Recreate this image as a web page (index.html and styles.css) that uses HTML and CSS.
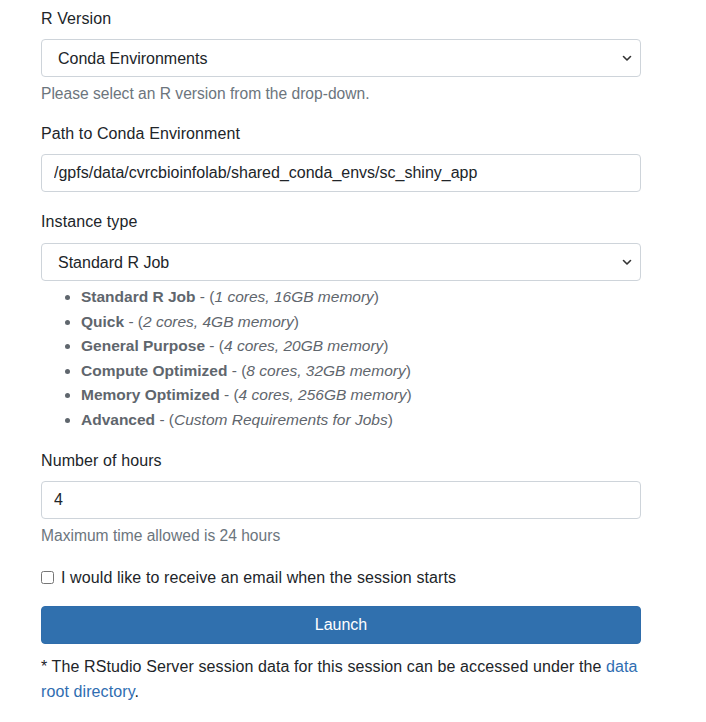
FILE: index.html
```html
<!DOCTYPE html>
<html lang="en">
<head>
<meta charset="utf-8">
<title>RStudio Server</title>
<link rel="stylesheet" href="styles.css">
</head>
<body>
<form class="form">
  <div class="group">
    <label class="label" for="rver">R Version</label>
    <div class="select-wrap">
      <select id="rver" class="control select"><option>Conda Environments</option></select>
      <svg class="chev" width="10" height="7" viewBox="0 0 10 7"><path d="M1.5 1.5 L5 5 L8.5 1.5" fill="none" stroke="#333" stroke-width="1.6" stroke-linecap="round" stroke-linejoin="round"/></svg>
    </div>
    <small class="help">Please select an R version from the drop-down.</small>
  </div>
  <div class="group group-path">
    <label class="label" for="path">Path to Conda Environment</label>
    <input id="path" class="control input" type="text" value="/gpfs/data/cvrcbioinfolab/shared_conda_envs/sc_shiny_app">
  </div>
  <div class="group group-types">
    <label class="label" for="inst">Instance type</label>
    <div class="select-wrap">
      <select id="inst" class="control select"><option>Standard R Job</option></select>
      <svg class="chev" width="10" height="7" viewBox="0 0 10 7"><path d="M1.5 1.5 L5 5 L8.5 1.5" fill="none" stroke="#333" stroke-width="1.6" stroke-linecap="round" stroke-linejoin="round"/></svg>
    </div>
    <ul class="types">
      <li><b>Standard R Job</b> - (<i>1 cores, 16GB memory</i>)</li>
      <li><b>Quick</b> - (<i>2 cores, 4GB memory</i>)</li>
      <li><b>General Purpose</b> - (<i>4 cores, 20GB memory</i>)</li>
      <li><b>Compute Optimized</b> - (<i>8 cores, 32GB memory</i>)</li>
      <li><b>Memory Optimized</b> - (<i>4 cores, 256GB memory</i>)</li>
      <li><b>Advanced</b> - (<i>Custom Requirements for Jobs</i>)</li>
    </ul>
  </div>
  <div class="group">
    <label class="label" for="hours">Number of hours</label>
    <input id="hours" class="control input" type="text" value="4">
    <small class="help">Maximum time allowed is 24 hours</small>
  </div>
  <div class="group check">
    <input id="email" type="checkbox" class="box">
    <label for="email" class="check-label">I would like to receive an email when the session starts</label>
  </div>
  <button type="button" class="btn">Launch</button>
  <p class="note">* The RStudio Server session data for this session can be accessed under the <a href="#" class="link">data root directory</a>.</p>
</form>
</body>
</html>
```

FILE: styles.css
```css
* { box-sizing: border-box; }
html, body { margin: 0; padding: 0; background: #fff; }
body {
  font-family: "Liberation Sans", Arial, sans-serif;
  font-size: 16px;
  line-height: 24px;
  color: #212529;
}
.form {
  width: 600px;
  margin-left: 41px;
  padding-top: 7px;
  display: flex;
  flex-direction: column;
}
.group {
  display: flex;
  flex-direction: column;
  margin-bottom: 17px;
}
.group-path { margin-bottom: 18px; }
.group-types { margin-bottom: 16px; }
.group-types .label { margin-bottom: 9px; }
.label {
  display: block;
  margin-bottom: 8px;
  letter-spacing: 0.1px;
}
.control {
  display: block;
  width: 100%;
  height: 38px;
  border: 1px solid #ced4da;
  border-radius: 4px;
  background: #fff;
  font-family: inherit;
  font-size: 16px;
  color: #212529;
  margin: 0;
  outline: none;
}
.input { padding: 0 12px; }
.select-wrap { position: relative; }
.select {
  appearance: none;
  -webkit-appearance: none;
  padding: 0 30px 0 16px;
}
.chev {
  position: absolute;
  right: 9px;
  top: 16px;
  pointer-events: none;
}
.help {
  display: block;
  margin-top: 6px;
  font-size: 15.6px;
  line-height: 22px;
  color: #6c757d;
}
.types {
  margin: 4px 0 0;
  padding-left: 40px;
  font-size: 15.5px;
  line-height: 24.6px;
  color: #5f666d;
}
.types b { font-weight: bold; }
.check {
  flex-direction: row;
  align-items: center;
  height: 26px;
  margin-top: 1px;
  margin-bottom: 15px;
}
.box {
  width: 13px;
  height: 13px;
  margin: 0 7px 0 0;
}
.check-label { line-height: 26px; letter-spacing: 0.1px; }
.btn {
  height: 38px;
  width: 100%;
  border: 1px solid #2f6dab;
  border-radius: 4px;
  background: #3070ae;
  color: #fff;
  font-family: inherit;
  font-size: 16px;
  padding: 0;
}
.note {
  margin: 10px 0 0;
  line-height: 25px;
  letter-spacing: 0.1px;
}
.link { color: #2f6db1; text-decoration: none; }
```
